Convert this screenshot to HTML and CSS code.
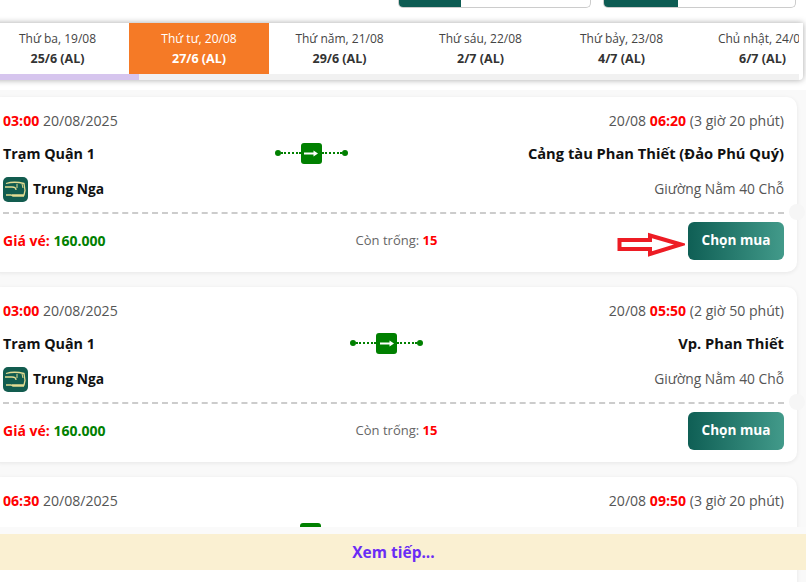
FILE: index.html
```html
<!DOCTYPE html>
<html lang="vi">
<head>
<meta charset="utf-8">
<title>Chọn chuyến</title>
<link rel="stylesheet" href="styles.css">
</head>
<body>
<div class="page">
  <div class="pills">
    <div class="pill"><span class="pill-fill"></span></div>
    <div class="pill"><span class="pill-fill pill-fill-b"></span></div>
  </div>
  <div class="strip">
    <div class="days">
      <div class="day day-first"><span>Thứ ba, 19/08</span><b>25/6 (AL)</b></div>
      <div class="day active"><span>Thứ tư, 20/08</span><b>27/6 (AL)</b></div>
      <div class="day"><span>Thứ năm, 21/08</span><b>29/6 (AL)</b></div>
      <div class="day"><span>Thứ sáu, 22/08</span><b>2/7 (AL)</b></div>
      <div class="day"><span>Thứ bảy, 23/08</span><b>4/7 (AL)</b></div>
      <div class="day"><span>Chủ nhật, 24/08</span><b>6/7 (AL)</b></div>
    </div>
    <div class="scroll"><div class="scroll-thumb"></div></div>
  </div>
  <div class="list">
    <article class="card">
      <div class="row">
        <div class="time"><b>03:00</b> 20/08/2025</div>
        <div class="time"><span>20/08</span> <b>06:20</b> (3 giờ 20 phút)</div>
      </div>
      <div class="row route">
        <div class="place place-from">Trạm Quận 1</div>
        <div class="link">
          <i class="dot"></i><i class="dots"></i>
          <span class="go"><svg width="14" height="7" viewBox="0 0 14 7"><path d="M0 2.500h9.500V0.500L14 3.500 9.500 6.500V4.500H0z" fill="#fff"/></svg></span>
          <i class="dots"></i><i class="dot"></i>
        </div>
        <div class="place">Cảng tàu Phan Thiết (Đảo Phú Quý)</div>
      </div>
      <div class="row operator">
        <div class="brand">
          <svg class="logo" width="25" height="25" viewBox="0 0 25 25"><rect width="25" height="25" rx="5" fill="#125c4f"/><path d="M3 6.500c5-1.500 12-1.500 18 0l1 7-1 4.500H9M2 10h7c3 0 4 1 4 3M3 18h5l2 1h11" fill="none" stroke="#e3dc93" stroke-width="1.300"/><path d="M14 7v4M19 7l1 4" stroke="#e3dc93" stroke-width="1"/></svg>
          <b>Trung Nga</b>
        </div>
        <div class="seat">Giường Nằm 40 Chỗ</div>
      </div>
      <div class="ticket">
        <div class="price"><b class="red">Giá vé:</b> <b class="green">160.000</b></div>
        <div class="left">Còn trống: <b>15</b></div>
        <div class="action">
          <svg class="mark" width="68" height="26" viewBox="0 0 68 26"><path d="M2.500 8H33V3.500L64 12.500 33 22V17H2.500z" fill="#fff" stroke="#ed1c24" stroke-width="4"/></svg>
          <button class="buy">Chọn mua</button>
        </div>
      </div>
    </article>
    <article class="card">
      <div class="row">
        <div class="time"><b>03:00</b> 20/08/2025</div>
        <div class="time"><span>20/08</span> <b>05:50</b> (2 giờ 50 phút)</div>
      </div>
      <div class="row route">
        <div class="place place-from">Trạm Quận 1</div>
        <div class="link">
          <i class="dot"></i><i class="dots"></i>
          <span class="go"><svg width="14" height="7" viewBox="0 0 14 7"><path d="M0 2.500h9.500V0.500L14 3.500 9.500 6.500V4.500H0z" fill="#fff"/></svg></span>
          <i class="dots"></i><i class="dot"></i>
        </div>
        <div class="place">Vp. Phan Thiết</div>
      </div>
      <div class="row operator">
        <div class="brand">
          <svg class="logo" width="25" height="25" viewBox="0 0 25 25"><rect width="25" height="25" rx="5" fill="#125c4f"/><path d="M3 6.500c5-1.500 12-1.500 18 0l1 7-1 4.500H9M2 10h7c3 0 4 1 4 3M3 18h5l2 1h11" fill="none" stroke="#e3dc93" stroke-width="1.300"/><path d="M14 7v4M19 7l1 4" stroke="#e3dc93" stroke-width="1"/></svg>
          <b>Trung Nga</b>
        </div>
        <div class="seat">Giường Nằm 40 Chỗ</div>
      </div>
      <div class="ticket">
        <div class="price"><b class="red">Giá vé:</b> <b class="green">160.000</b></div>
        <div class="left">Còn trống: <b>15</b></div>
        <div class="action"><button class="buy">Chọn mua</button></div>
      </div>
    </article>
    <article class="card">
      <div class="row">
        <div class="time"><b>06:30</b> 20/08/2025</div>
        <div class="time"><span>20/08</span> <b>09:50</b> (3 giờ 20 phút)</div>
      </div>
      <div class="row route route-c">
        <div class="link">
          <i class="dot"></i><i class="dots"></i>
          <span class="go"></span>
          <i class="dots"></i><i class="dot"></i>
        </div>
      </div>
    </article>
  </div>
  <div class="more-wrap"><a class="more">Xem tiếp...</a></div>
</div>
</body>
</html>
```
FILE: styles.css
```css
* { box-sizing: border-box; }
html, body { margin: 0; height: 100%; overflow: hidden; background: #fff; }
body { font-family: "Open Sans", "Noto Sans", sans-serif; color: #444; }
.page { position: relative; width: 806px; height: 582px; overflow: hidden; background: #fff; }
.pills { height: 8px; display: flex; justify-content: flex-end; gap: 12px; padding-right: 10px; }
.pill { width: 193px; height: 8px; display: flex; background: #fff; border: 1px solid #ccc; border-top: 0; border-radius: 0 0 5px 5px; overflow: hidden; }
.pill-fill { width: 62px; background: #0d5c53; }
.pill-fill-b { width: 74px; }
.strip { position: relative; margin: 15px 3px 10px -10px; padding-right: 4px; height: 57px; background: #fff; border-radius: 0 0 4px 4px; box-shadow: 0 0 6px rgba(0,0,0,.35); overflow: hidden; }
.days { display: flex; height: 51px; overflow: hidden; }
.day { flex: 0 0 141px; display: flex; flex-direction: column; align-items: center; font-size: 12px; color: #444; padding-top: 6px; line-height: 20px; white-space: nowrap; }
.day-first { margin-left: -4px; flex-basis: 143px; }
.day b { font-size: 12.500px; font-weight: 700; color: #333; }
.day.active { background: #f57a26; color: #fff; flex-basis: 140px; }
.day.active b { color: #fff; }
.scroll { height: 6px; background: #f1f1f1; }
.scroll-thumb { width: 149px; height: 6px; background: #d6c5ee; }
.list { height: 492px; padding: 7px 9px 0 0; margin-left: -10px; background: #f9f9f9; display: flex; flex-direction: column; gap: 15px; overflow: hidden; }
.card { position: relative; flex: 0 0 175px; padding: 12px 13px 0 13px; background: #fff; border-radius: 10px; box-shadow: 0 1px 4px rgba(0,0,0,.08); }
.card::after { content: ""; position: absolute; right: -8px; top: 107px; width: 16px; height: 16px; border-radius: 50%; background: #f6f6f6; }
.row { display: flex; justify-content: space-between; align-items: center; }
.time { font-size: 14.100px; line-height: 24px; color: #555; }
.time b { color: #f00; font-weight: 700; }
.route { margin-top: 8px; height: 24px; }
.route-c { justify-content: center; padding-right: 166px; }
.place { font-size: 14.700px; font-weight: 700; color: #111; white-space: nowrap; }
.place-from { font-size: 14.300px; }
.link { display: flex; align-items: center; }
.dot { width: 6px; height: 6px; border-radius: 50%; background: #008000; }
.dots { width: 20px; border-top: 2px dotted #008000; }
.go { width: 21px; height: 21px; display: flex; align-items: center; justify-content: center; border-radius: 3px; background: #008000; }
.operator { margin-top: 12px; height: 25px; }
.brand { display: flex; align-items: center; gap: 5px; font-size: 13.800px; color: #111; }
.brand b { padding-bottom: 2px; }
.logo { display: block; }
.seat { font-size: 13.800px; color: #555; padding-bottom: 2px; }
.ticket { display: grid; grid-template-columns: 1fr 1fr 1fr; align-items: center; margin-top: 10px; padding-top: 8px; border-top: 2px dashed #ccc; }
.price { font-size: 14px; padding-bottom: 2px; }
.red { color: #f00; }
.green { color: #008000; }
.left { font-size: 13px; color: #666; text-align: center; padding: 0 0 2px 6px; }
.left b { color: #f00; }
.action { display: flex; justify-content: flex-end; align-items: center; }
.mark { margin: 7px 3px 0 0; }
.buy { width: 96px; height: 38px; padding: 0 0 3px; border: 0; border-radius: 6px; background: linear-gradient(90deg, #0f5f55, #429a8a); color: #fff; font: 700 13.600px "Open Sans", sans-serif; }
.more-wrap { position: absolute; left: 0; right: 0; top: 527px; height: 43px; padding-top: 7px; background: #fafafa; }
.more { display: block; height: 36px; line-height: 36px; padding-right: 19px; background: #faf0d2; color: #6a2cf5; font-size: 15.500px; font-weight: 700; text-align: center; }
```
